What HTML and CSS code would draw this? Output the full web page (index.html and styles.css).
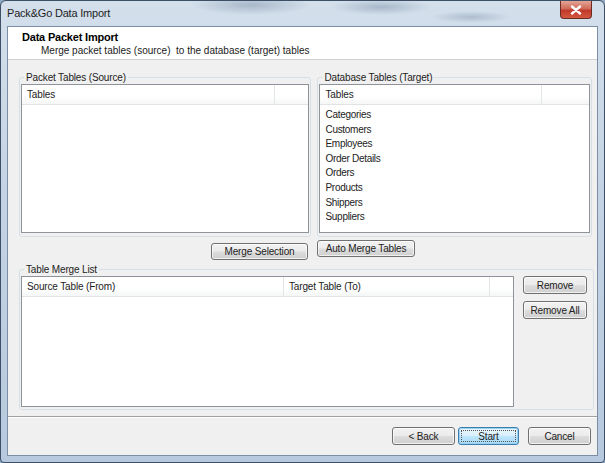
FILE: index.html
```html
<!DOCTYPE html>
<html>
<head>
<meta charset="utf-8">
<link rel="stylesheet" href="styles.css">
</head>
<body>
<div class="window">
  <div class="titlebar">
    <span class="title">Pack&amp;Go Data Import</span>
    <div class="close">
      <svg width="12" height="10" viewBox="0 0 12 10"><path d="M2 1.5 L10 8.5 M10 1.5 L2 8.5" stroke="#fff" stroke-width="2.4" stroke-linecap="round"/></svg>
    </div>
  </div>
  <div class="client">
    <div class="header">
      <div class="h-title">Data Packet Import</div>
      <div class="h-sub">Merge packet tables (source)&nbsp; to the database (target) tables</div>
    </div>
    <div class="body">
      <div class="top-row">
        <fieldset class="group g-source">
          <legend>Packet Tables (Source)</legend>
          <div class="list">
            <div class="lv-head"><div class="col c-main">Tables</div><div class="col c-rest"></div></div>
            <div class="lv-body"></div>
          </div>
        </fieldset>
        <fieldset class="group g-target">
          <legend>Database Tables (Target)</legend>
          <div class="list">
            <div class="lv-head"><div class="col c-main">Tables</div><div class="col c-rest"></div></div>
            <div class="lv-body items">
              <div>Categories</div>
              <div>Customers</div>
              <div>Employees</div>
              <div>Order Details</div>
              <div>Orders</div>
              <div>Products</div>
              <div>Shippers</div>
              <div>Suppliers</div>
            </div>
          </div>
        </fieldset>
      </div>
      <div class="merge-row">
        <button class="btn b-merge">Merge Selection</button>
        <button class="btn b-auto">Auto Merge Tables</button>
      </div>
      <fieldset class="group g-merge">
        <legend>Table Merge List</legend>
        <div class="merge-inner">
          <div class="list m-list">
            <div class="lv-head"><div class="col m-c1">Source Table (From)</div><div class="col m-c2">Target Table (To)</div><div class="col c-rest"></div></div>
            <div class="lv-body"></div>
          </div>
          <div class="side">
            <button class="btn b-side">Remove</button>
            <button class="btn b-side">Remove All</button>
          </div>
        </div>
      </fieldset>
    </div>
    <div class="footer">
      <button class="btn b-foot">&lt; Back</button>
      <button class="btn b-foot b-start"><span class="focus">Start</span></button>
      <button class="btn b-foot b-cancel">Cancel</button>
    </div>
  </div>
</div>
</body>
</html>
```

FILE: styles.css
```css
* { box-sizing: border-box; }
html, body { margin: 0; padding: 0; }
body {
  width: 605px;
  height: 463px;
  overflow: hidden;
  font-family: "Liberation Sans", Arial, sans-serif;
  font-size: 10px;
  letter-spacing: -0.15px;
  color: #000;
  background: #8fa8c4;
}
.window {
  width: 605px;
  height: 463px;
  display: flex;
  flex-direction: column;
  border: 1px solid #3d4f66;
  border-radius: 6px 6px 4px 4px;
  background:
    radial-gradient(ellipse 60px 10px at 250px 4px, rgba(90,110,140,0.35), transparent),
    radial-gradient(ellipse 50px 8px at 380px 6px, rgba(90,110,140,0.35), transparent),
    radial-gradient(ellipse 40px 6px at 470px 16px, rgba(90,110,140,0.3), transparent),
    linear-gradient(180deg, #d3dfeb 0%, #c5d4e4 40%, #b6c9de 100%);
  overflow: hidden;
}
.titlebar {
  height: 25px;
  flex: none;
  display: flex;
  align-items: flex-start;
  padding-left: 6px;
}
.title {
  font-size: 11px;
  letter-spacing: -0.2px;
  color: #1e1e1e;
  margin-top: 6px;
}
.close {
  margin-left: auto;
  margin-right: 12px;
  width: 32px;
  height: 18px;
  border: 1px solid #6b2a22;
  border-top: none;
  border-radius: 0 0 4px 4px;
  background: linear-gradient(180deg, #e4a597 0%, #cf6b58 45%, #c0392a 55%, #d3573f 100%);
  display: flex;
  align-items: center;
  justify-content: center;
}
.client {
  flex: 1;
  margin: 0 6px 6px 6px;
  background: #f0f0f0;
  border: 1px solid #7c8ea6;
  display: flex;
  flex-direction: column;
}
.header {
  height: 33px;
  flex: none;
  background: #fff;
  border-bottom: 1px solid #d0d0d0;
  padding: 4px 0 0 14px;
}
.h-title {
  font-weight: bold;
  font-size: 11px;
  line-height: 13px;
  letter-spacing: -0.2px;
}
.h-sub {
  margin-left: 19px;
  line-height: 14px;
  letter-spacing: 0;
  color: #222;
}
.body {
  height: 357px;
  flex: none;
  padding: 11px 5px 0 11px;
  border-bottom: 1px solid #a0a0a0;
  box-shadow: 0 1px 0 #fff;
}
.group {
  margin: 0;
  padding: 0 1px 2px 1px;
  border: 1px solid #d5dfe5;
  border-radius: 3px;
  min-width: 0;
}
.group legend {
  padding: 0 2px;
  margin-left: 3px;
  line-height: 13px;
  color: #222;
}
.top-row {
  display: flex;
  gap: 6px;
}
.g-source { width: 293px; height: 166px; }
.g-target { width: 275px; height: 166px; }
.list {
  background: #fff;
  border: 1px solid #8e9399;
  height: 149px;
  display: flex;
  flex-direction: column;
}
.lv-head {
  height: 20px;
  flex: none;
  display: flex;
  background: linear-gradient(180deg, #ffffff 0%, #ffffff 60%, #f5f6f7 100%);
  border-bottom: 1px solid #e2e3e5;
}
.col {
  line-height: 19px;
  padding-left: 5px;
  color: #222;
  white-space: nowrap;
}
.g-source .c-main { width: 253px; border-right: 1px solid #e4e5e7; }
.g-target .c-main { width: 222px; border-right: 1px solid #e4e5e7; }
.c-rest { flex: 1; }
.items {
  padding: 3px 0 0 5px;
  line-height: 14.6px;
  letter-spacing: -0.3px;
  color: #222;
}
.merge-row {
  display: flex;
  align-items: flex-start;
  padding-left: 192px;
  height: 26px;
}
.btn {
  font-family: "Liberation Sans", Arial, sans-serif;
  font-size: 10px;
  letter-spacing: -0.15px;
  color: #222;
  border: 1px solid #707070;
  border-radius: 3px;
  background: linear-gradient(180deg, #f2f2f2 0%, #ebebeb 48%, #dddddd 52%, #cfcfcf 100%);
  box-shadow: inset 0 0 0 1px rgba(255,255,255,0.7);
  padding: 0;
  margin: 0;
  display: flex;
  align-items: center;
  justify-content: center;
}
.b-merge { width: 97px; height: 17px; margin-top: 6px; }
.b-auto { width: 98px; height: 17px; margin-top: 3px; margin-left: 9px; }
.g-merge { width: 575px; }
.merge-inner {
  display: flex;
  gap: 9px;
}
.m-list { width: 493px; height: 131px; }
.m-c1 { width: 262px; border-right: 1px solid #e4e5e7; }
.m-c2 { width: 206px; border-right: 1px solid #e4e5e7; }
.side {
  display: flex;
  flex-direction: column;
  gap: 7px;
}
.b-side { width: 64px; height: 18px; }
.footer {
  flex: 1;
  display: flex;
  justify-content: flex-end;
  align-items: flex-start;
  padding: 10px 6px 0 0;
  gap: 3px;
}
.b-foot { width: 63px; height: 18px; }
.b-start {
  width: 61px;
  border-color: #3c7fb1;
  box-shadow: inset 0 0 0 1px #9bd1ef;
  background: linear-gradient(180deg, #eaf6fd 0%, #d9f0fc 48%, #bee6fd 52%, #a7d9f5 100%);
}
.focus {
  display: flex;
  align-items: center;
  justify-content: center;
  width: 55px;
  height: 12px;
  border: 1px dotted #555;
}
.b-cancel { margin-left: 6px; }
```
